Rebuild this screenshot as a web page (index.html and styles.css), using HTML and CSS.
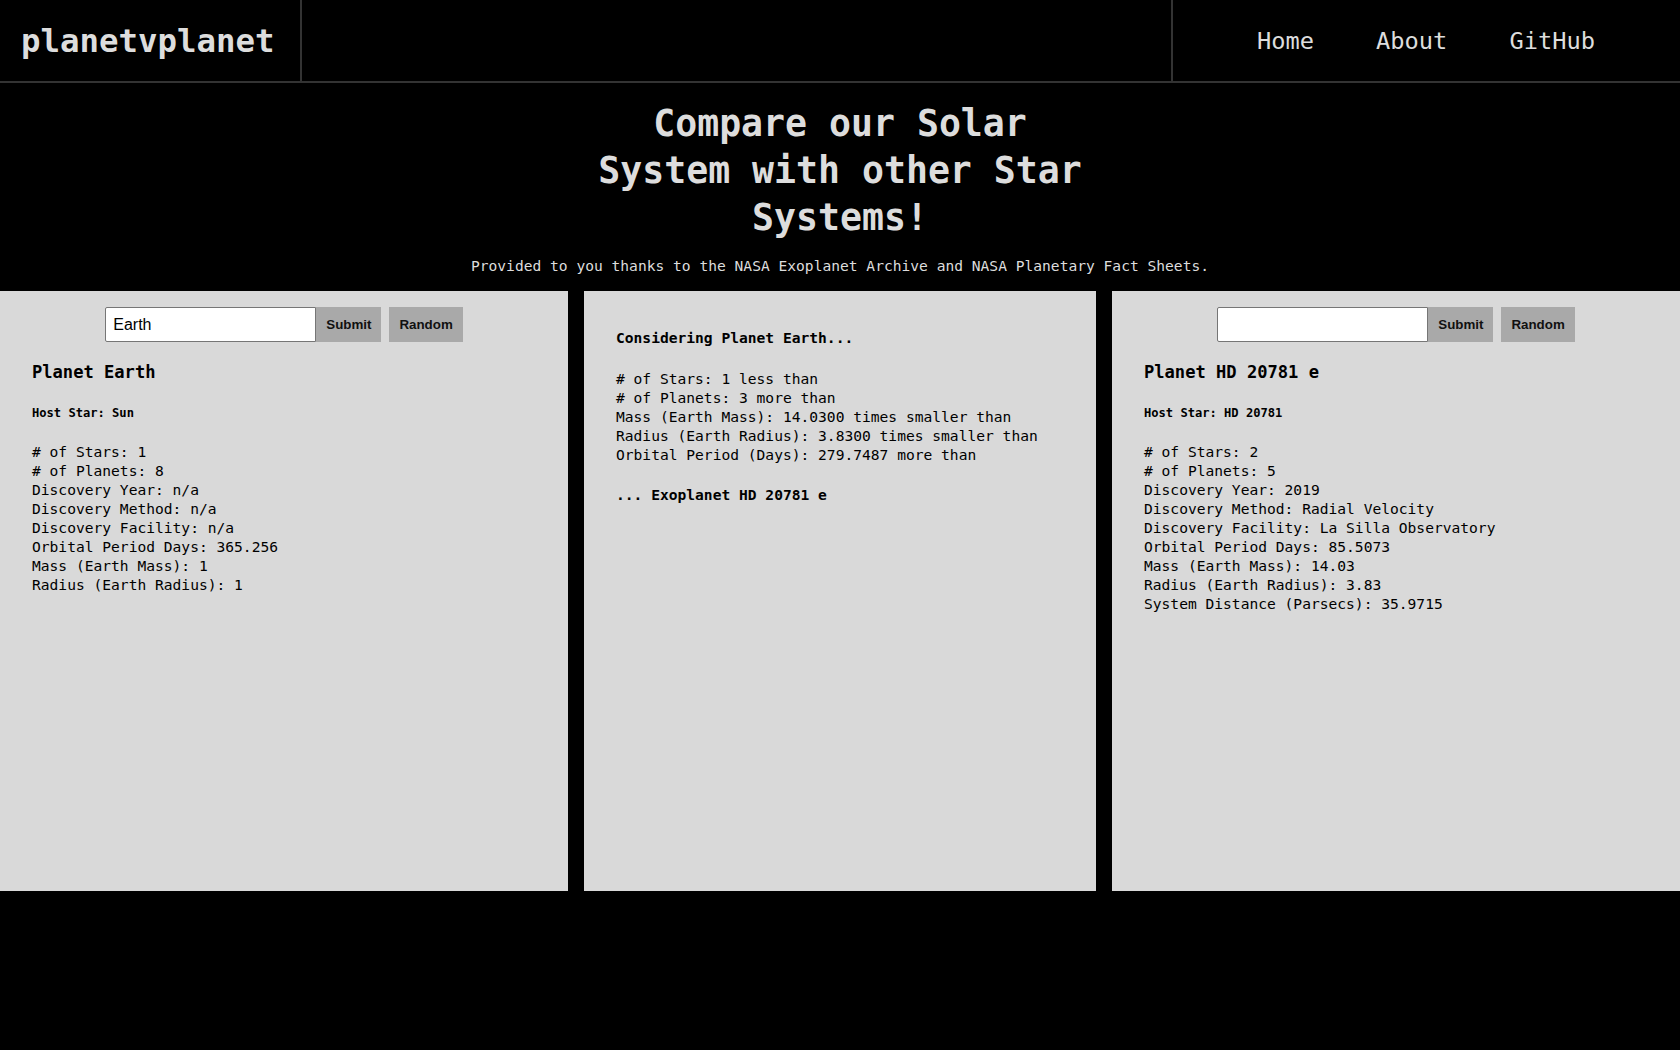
FILE: index.html
```html
<!DOCTYPE html>
<html lang="en">
<head>
<meta charset="utf-8">
<title>planetvplanet</title>
<link rel="stylesheet" href="styles.css">
</head>
<body>
<header class="topbar">
  <div class="brand">planetvplanet</div>
  <div class="spacer"></div>
  <nav class="nav">
    <a href="#">Home</a>
    <a href="#">About</a>
    <a href="#">GitHub</a>
  </nav>
</header>

<section class="hero">
  <h1 class="hero-title">Compare our Solar System with other Star Systems!</h1>
  <p class="hero-sub">Provided to you thanks to the NASA Exoplanet Archive and NASA Planetary Fact Sheets.</p>
</section>

<main class="panels">
  <section class="panel side">
    <form class="controls">
      <input class="search" type="text" value="Earth">
      <button class="btn" type="button">Submit</button>
      <button class="btn btn-random" type="button">Random</button>
    </form>
    <h3 class="planet-name">Planet Earth</h3>
    <h5 class="host">Host Star: Sun</h5>
    <div class="stats">
      <div># of Stars: 1</div>
      <div># of Planets: 8</div>
      <div>Discovery Year: n/a</div>
      <div>Discovery Method: n/a</div>
      <div>Discovery Facility: n/a</div>
      <div>Orbital Period Days: 365.256</div>
      <div>Mass (Earth Mass): 1</div>
      <div>Radius (Earth Radius): 1</div>
    </div>
  </section>

  <section class="panel middle">
    <div class="considering">Considering Planet Earth...</div>
    <div class="stats">
      <div># of Stars: 1 less than</div>
      <div># of Planets: 3 more than</div>
      <div>Mass (Earth Mass): 14.0300 times smaller than</div>
      <div>Radius (Earth Radius): 3.8300 times smaller than</div>
      <div>Orbital Period (Days): 279.7487 more than</div>
    </div>
    <div class="considering target">... Exoplanet HD 20781 e</div>
  </section>

  <section class="panel side">
    <form class="controls">
      <input class="search" type="text" value="">
      <button class="btn" type="button">Submit</button>
      <button class="btn btn-random" type="button">Random</button>
    </form>
    <h3 class="planet-name">Planet HD 20781 e</h3>
    <h5 class="host">Host Star: HD 20781</h5>
    <div class="stats">
      <div># of Stars: 2</div>
      <div># of Planets: 5</div>
      <div>Discovery Year: 2019</div>
      <div>Discovery Method: Radial Velocity</div>
      <div>Discovery Facility: La Silla Observatory</div>
      <div>Orbital Period Days: 85.5073</div>
      <div>Mass (Earth Mass): 14.03</div>
      <div>Radius (Earth Radius): 3.83</div>
      <div>System Distance (Parsecs): 35.9715</div>
    </div>
  </section>
</main>
</body>
</html>
```

FILE: styles.css
```css
* { box-sizing: border-box; }

html, body {
  margin: 0;
  padding: 0;
  background: #000;
}

body {
  font-family: "DejaVu Sans Mono", monospace;
  color: #000;
  min-height: 1050px;
}

/* Header */
.topbar {
  display: flex;
  height: 83px;
  border-bottom: 2px solid #333;
  color: #ddd;
}

.brand {
  flex: none;
  width: 302px;
  border-right: 2px solid #333;
  display: flex;
  align-items: center;
  padding-left: 21px;
  font-size: 32.4px;
  font-weight: bold;
}

.spacer { flex: 1; }

.nav {
  flex: none;
  width: 509px;
  border-left: 2px solid #333;
  display: flex;
  align-items: center;
  justify-content: center;
  gap: 62px;
  padding-right: 1px;
}

.nav a {
  color: #ddd;
  text-decoration: none;
  font-size: 23.7px;
}

/* Hero */
.hero {
  padding-top: 17px;
  text-align: center;
  color: #ddd;
}

.hero-title {
  width: 504px;
  margin: 0 auto;
  font-size: 36.5px;
  line-height: 47px;
  font-weight: bold;
}

.hero-sub {
  margin: 15px 0 0;
  font-size: 14.6px;
  line-height: 19px;
}

/* Panels */
.panels {
  margin-top: 16px;
  display: grid;
  grid-template-columns: 568fr 512fr 568fr;
  gap: 16px;
}

.panel {
  background: #d9d9d9;
  height: 600px;
  padding: 16px 32px;
  font-size: 14.6px;
  line-height: 19px;
}

.controls {
  display: flex;
  justify-content: center;
  height: 35px;
  margin: 0;
}

.search {
  width: 211px;
  height: 35px;
  margin: 0;
  padding: 0 7px;
  border: 1px solid #767676;
  border-radius: 2px 0 0 2px;
  background: #fff;
  font-family: "Liberation Sans", Arial, sans-serif;
  font-size: 16px;
  color: #000;
}

.btn {
  height: 35px;
  margin: 0;
  padding: 0 10px;
  border: none;
  background: #a9a9a9;
  font-family: "Liberation Sans", Arial, sans-serif;
  font-size: 13.33px;
  font-weight: bold;
  color: #111;
}

.btn-random { margin-left: 8px; }

.planet-name {
  margin: 19px 0 0;
  font-size: 17.1px;
  line-height: 22px;
  font-weight: bold;
}

.host {
  margin: 22px 0 0;
  font-size: 12.1px;
  line-height: 16px;
  font-weight: bold;
}

.host + .stats { margin-top: 21px; }

.middle { padding-top: 37px; }

.considering {
  font-weight: bold;
}

.considering + .stats { margin-top: 22px; }

.target { margin-top: 21px; }
```
